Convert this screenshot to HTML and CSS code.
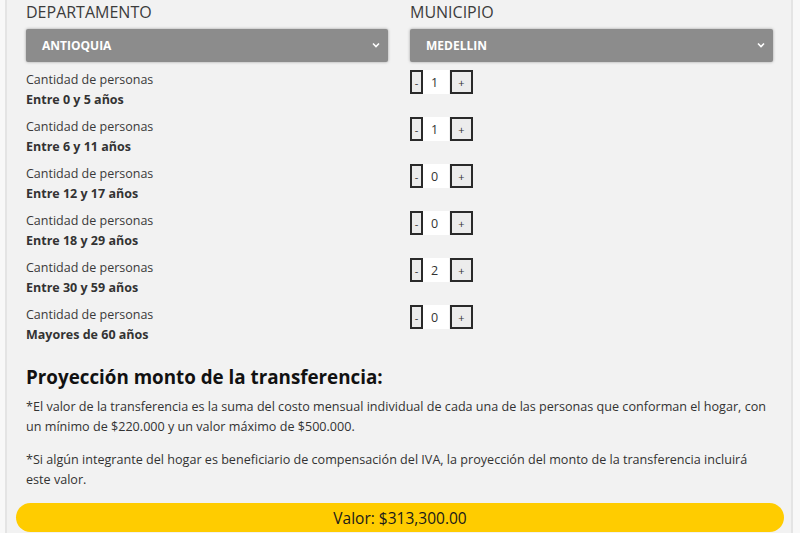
FILE: index.html
```html
<!DOCTYPE html>
<html lang="es">
<head>
<meta charset="utf-8">
<title>Proyección</title>
<link rel="stylesheet" href="styles.css">
</head>
<body>
<div class="panel">
  <div class="grid">
    <div class="field">
      <div class="field-title">DEPARTAMENTO</div>
      <div class="select"><span>ANTIOQUIA</span><svg class="chev" width="8" height="6" viewBox="0 0 8 6"><path d="M1 1.5 L4 4.5 L7 1.5" fill="none" stroke="#fff" stroke-width="1.6"/></svg></div>
    </div>
    <div class="field">
      <div class="field-title">MUNICIPIO</div>
      <div class="select"><span>MEDELLIN</span><svg class="chev" width="8" height="6" viewBox="0 0 8 6"><path d="M1 1.5 L4 4.5 L7 1.5" fill="none" stroke="#fff" stroke-width="1.6"/></svg></div>
    </div>

    <div class="label">Cantidad de personas<br><b>Entre 0 y 5 años</b></div>
    <div class="counter"><button class="btn">-</button><span class="val">1</span><button class="btn plus">+</button></div>

    <div class="label">Cantidad de personas<br><b>Entre 6 y 11 años</b></div>
    <div class="counter"><button class="btn">-</button><span class="val">1</span><button class="btn plus">+</button></div>

    <div class="label">Cantidad de personas<br><b>Entre 12 y 17 años</b></div>
    <div class="counter"><button class="btn">-</button><span class="val">0</span><button class="btn plus">+</button></div>

    <div class="label">Cantidad de personas<br><b>Entre 18 y 29 años</b></div>
    <div class="counter"><button class="btn">-</button><span class="val">0</span><button class="btn plus">+</button></div>

    <div class="label">Cantidad de personas<br><b>Entre 30 y 59 años</b></div>
    <div class="counter"><button class="btn">-</button><span class="val">2</span><button class="btn plus">+</button></div>

    <div class="label">Cantidad de personas<br><b>Mayores de 60 años</b></div>
    <div class="counter"><button class="btn">-</button><span class="val">0</span><button class="btn plus">+</button></div>
  </div>

  <div class="info">
    <h2>Proyección monto de la transferencia:</h2>
    <p>*El valor de la transferencia es la suma del costo mensual individual de cada una de las personas que conforman el hogar, con un mínimo de $220.000 y un valor máximo de $500.000.</p>
    <p>*Si algún integrante del hogar es beneficiario de compensación del IVA, la proyección del monto de la transferencia incluirá este valor.</p>
  </div>

  <div class="total">Valor: $313,300.00</div>
</div>
</body>
</html>
```

FILE: styles.css
```css
* { box-sizing: border-box; }
html, body { margin: 0; padding: 0; }
body {
  background: #f8f8f8;
  font-family: "Open Sans", "Noto Sans", sans-serif;
  color: #333;
  height: 533px;
  overflow: hidden;
}
.panel {
  margin-left: 5px;
  width: 788px;
  height: 533px;
  background: #f2f2f2;
  border-left: 2px solid #e4e4e4;
  border-right: 2px solid #e4e4e4;
  padding: 0 0 0 19px;
}
.grid {
  display: grid;
  grid-template-columns: 362px 363px;
  column-gap: 22px;
  row-gap: 7px;
}
.field { display: flex; flex-direction: column; margin-bottom: 1px; }
.field-title {
  font-size: 16px;
  line-height: 22px;
  padding-top: 1px;
  color: #3c3c3c;
  margin-bottom: 6px;
}
.select {
  height: 33px;
  background: #8c8c8c;
  border-radius: 2px;
  box-shadow: 0 0 3px rgba(0,0,0,0.35);
  display: flex;
  align-items: center;
  justify-content: space-between;
  padding: 0 8px 0 16px;
  color: #fff;
  font-weight: 700;
  font-size: 12px;
}
.chev { margin-top: -1px; }
.label {
  font-size: 12.5px;
  line-height: 20px;
  height: 40px;
  color: #3a3a3a;
}
.label b { font-weight: 700; color: #333; }
.counter { display: flex; align-items: stretch; height: 24px; }
.btn {
  margin: 0;
  font-family: "Open Sans", sans-serif;
  font-size: 11px;
  color: #333;
  background: #ececec;
  border: 2px solid #2a2a2a;
  padding: 0 3px;
  width: 13px;
  display: flex;
  align-items: center;
  justify-content: center;
}
.btn.plus { width: 23px; margin-left: 1px; }
.val {
  width: 26px;
  background: #fff;
  font-size: 12.5px;
  display: flex;
  align-items: center;
  padding-left: 8px;
  color: #333;
}
.info { padding-right: 20px; }
.info h2 {
  font-size: 18.8px;
  font-weight: 700;
  color: #111;
  margin: 19px 0 0 0;
  line-height: 26px;
}
.info p {
  font-size: 12.6px;
  line-height: 19.5px;
  margin: 7px 0 14px 0;
  color: #333;
}
.info p + p { margin-top: 14px; }
.total {
  margin: 13px 0 0 -10px;
  width: 768px;
  height: 29px;
  border-radius: 15px;
  background: #ffcc00;
  color: #1a1a1a;
  font-size: 15.5px;
  display: flex;
  align-items: center;
  justify-content: center;
}
```
